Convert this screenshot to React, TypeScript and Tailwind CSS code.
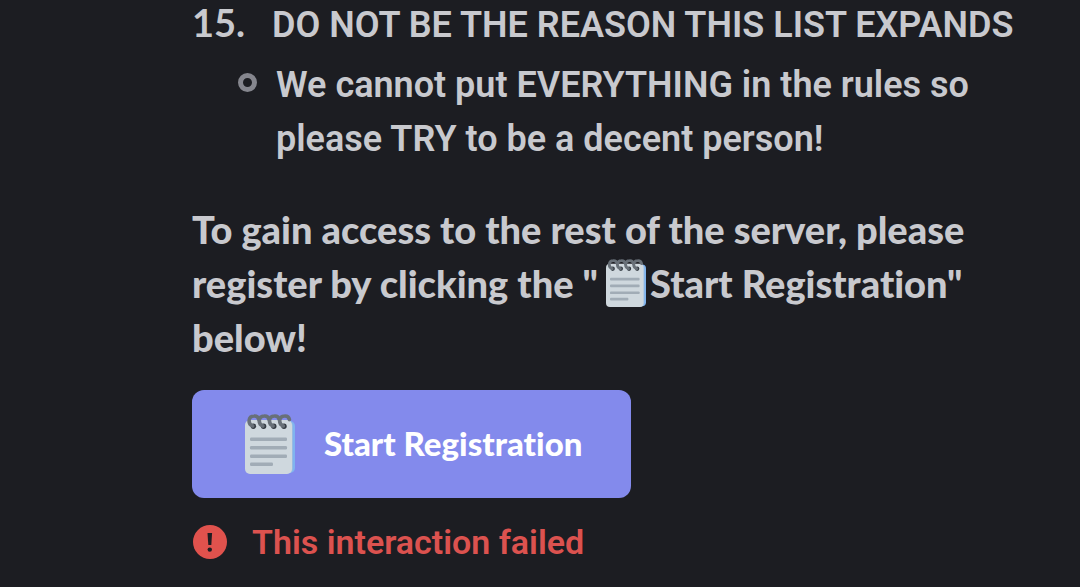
function Notepad({ className }: { className: string }) {
  const coils = [0, 10.2, 20.4, 30.6];
  return (
    <svg viewBox="0 0 50 60" className={className} aria-hidden="true">
      <rect x="6" y="7" width="44" height="52" rx="5" fill="#7fb4ef" />
      <rect x="4" y="7" width="44" height="52.5" rx="5" fill="#98bbe2" />
      <rect x="0" y="6" width="47" height="54" rx="5" fill="#cfd8de" />
      <g fill="#a1acb6">
        <rect x="5" y="23.5" width="37" height="3.4" rx="1.2" />
        <rect x="5" y="32" width="37" height="3.4" rx="1.2" />
        <rect x="5" y="40.5" width="37" height="3.4" rx="1.2" />
        <rect x="5" y="48.5" width="23" height="3.4" rx="1.2" />
      </g>
      {coils.map((x) => (
        <g key={x}>
          <circle cx={x + 8.4} cy="12.2" r="2.7" fill="#343b43" />
          <path
            d={`M${x + 7.6} 12C${x + 2.5} 10 ${x + 3} 2.2 ${x + 9} 2C${x + 12} 1.8 ${x + 13.4} 3.6 ${x + 13.8} 5.6`}
            fill="none"
            stroke="#687078"
            strokeWidth="3.6"
            strokeLinecap="round"
          />
        </g>
      ))}
    </svg>
  );
}

export default function App() {
  return (
    <main className="min-h-screen bg-[#1c1d22] pr-8 pl-48 font-['Roboto',sans-serif] text-[#c8c9ce] [font-variant-ligatures:none]">
      <ol start={15} className="list-none text-[36px] leading-[54px] font-semibold">
        <li>
          <div className="flex h-[57px] items-baseline leading-[45px]">
            <span className="w-20 shrink-0 font-['Lato',sans-serif] text-[38px] font-bold">15.</span>
            <span className="whitespace-nowrap">DO NOT BE THE REASON THIS LIST EXPANDS</span>
          </div>
          <ul className="list-none">
            <li className="flex items-start pt-px pl-[46px]">
              <span className="mt-[15px] mr-[19px] size-[19px] shrink-0 rounded-full border-[5px] border-[#85868e]" />
              <span className="whitespace-nowrap">
                We cannot put EVERYTHING in the rules so
                <br />
                please TRY to be a decent person!
              </span>
            </li>
          </ul>
        </li>
      </ol>
      <p className="mt-9 font-['Lato',sans-serif] text-[38px] leading-[54px] font-black whitespace-nowrap">
        To gain access to the rest of the server, please
        <br />
        register by clicking the &quot;
        <Notepad className="mr-1 ml-2 inline-block h-12 w-10 align-[-9px]" />
        Start Registration&quot;
        <br />
        below!
      </p>
      <button
        type="button"
        className="mt-[26px] flex h-[108px] items-center rounded-xl bg-[#838aec] pr-[49px] pl-[53px] font-['Lato',sans-serif] text-[33px] font-black text-white"
      >
        <Notepad className="mr-[29px] h-[60px] w-[50px]" />
        Start Registration
      </button>
      <p className="mt-5 flex items-center gap-[25px] pl-px text-[34px] leading-[48px] font-semibold text-[#dc524f]">
        <svg viewBox="0 0 34 34" className="size-[34px]" aria-hidden="true">
          <circle cx="17" cy="17" r="17" fill="#e0524d" />
          <path d="M14.5 8h4.6l-.8 12h-3z" fill="#1c1d22" />
          <circle cx="16.8" cy="24.6" r="2.2" fill="#1c1d22" />
        </svg>
        This interaction failed
      </p>
    </main>
  );
}
